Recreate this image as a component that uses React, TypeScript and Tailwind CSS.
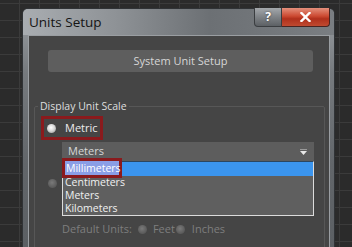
import React from "react";

function Radio({ on, className = "" }: { on?: boolean; className?: string }) {
  return (
    <span
      className={
        "block shrink-0 w-[9px] h-[9px] rounded-full " +
        (on
          ? "bg-[radial-gradient(circle_at_45%_40%,#ffffff,#d8d8d8_45%,#8a8a8a_100%)]"
          : "bg-[radial-gradient(circle_at_45%_40%,#7a7a7a,#5e5e5e_60%,#505050_100%)]") +
        " " +
        className
      }
    />
  );
}

export default function App() {
  return (
    <div className="w-[352px] h-[247px] overflow-hidden bg-[#2b2b2b] bg-[linear-gradient(to_right,#3b3b3b_1px,transparent_1px),linear-gradient(to_bottom,#3b3b3b_1px,transparent_1px)] bg-[size:20px_17px] bg-[position:19px_3px] pl-[22px] pt-[8px] font-['Segoe_UI','Open_Sans',sans-serif]">
      <div className="w-[313px] h-[260px] rounded-t-[6px] border border-[#303336] bg-[linear-gradient(to_bottom,#9a9ea2,#767a7e_25%,#62666a_60%,#5a5e62)] flex flex-col">
        {/* title bar */}
        <div className="h-[26px] flex items-start rounded-t-[5px] bg-[linear-gradient(to_right,#a9adb1,#8e9296_30%,#6c7074_60%,#7a7e82)]">
          <div className="pl-[6px] h-[26px] flex items-center text-[13.5px] text-[#151515]">Units Setup</div>
          <div className="flex-1" />
          <div className="flex mr-[4px] -mt-[1px]">
            <div className="w-[28px] h-[19px] rounded-bl-[4px] border border-[#3a3d40] border-t-0 bg-[linear-gradient(to_bottom,#a4a8ac,#7e8286_50%,#5c6064)] flex items-center justify-center text-white text-[12px] font-bold leading-none [text-shadow:0_0_2px_#333]">
              ?
            </div>
            <div className="w-[48px] h-[19px] rounded-br-[4px] border border-[#4a2420] border-t-0 border-l-0 bg-[linear-gradient(to_bottom,#e4907c,#cc4a32_45%,#b0301c_60%,#c04a30)] flex items-center justify-center">
              <svg width="11" height="10" viewBox="0 0 11 10">
                <path d="M1.5 1 L9.5 9 M9.5 1 L1.5 9" stroke="#ffffff" strokeWidth="2.4" strokeLinecap="square" />
              </svg>
            </div>
          </div>
        </div>
        {/* client */}
        <div className="flex-1 ml-[5px] mr-[4px] border border-[#9a9ea2] bg-[#454545] flex flex-col">
          <div className="mt-[14px] ml-[19px] w-[265px] h-[22px] rounded-[3px] bg-[#5e5e5e] flex items-center justify-center text-[11px] text-[#d6d6d6]">
            System Unit Setup
          </div>
          <fieldset className="mt-[27px] ml-[5px] w-[291px] h-[200px] border border-[#575757] rounded-[2px]">
            <legend className="ml-[3px] px-[2px] text-[10.5px] leading-[14px] text-[#dedede]">Display Unit Scale</legend>
            <div className="mt-[3px] ml-[6px] w-[62px] h-[24px] border-[3px] border-[#8a1a1d] flex items-center">
              <Radio on className="ml-[3px]" />
              <span className="ml-[9px] text-[11px] text-[#ececec]">Metric</span>
            </div>
            <div className="mt-[2px] ml-[27px] w-[252px] h-[19px] bg-[#5d5d5d] relative flex items-center pl-[6px] text-[11px] text-[#d6d6d6]">
              <span>Meters</span>
              <svg className="absolute right-[7px] top-[7px]" width="7" height="6" viewBox="0 0 7 6">
                <rect x="0" y="0" width="7" height="1" fill="#9a9a9a" />
                <path d="M0 2 L7 2 L3.5 6 Z" fill="#e8e8e8" />
              </svg>
              <div className="absolute left-0 top-full w-[252px] bg-[#5f5f5f] border border-[#dcdcdc] border-t-[#2c4660] text-[10.5px] text-[#f0f0f0] z-10">
                <div className="h-[14px] bg-[#3b95ee]" />
                <div className="h-[13px] leading-[13px] pl-[2px]">Centimeters</div>
                <div className="h-[13px] leading-[13px] pl-[2px]">Meters</div>
                <div className="h-[13px] leading-[13px] pl-[2px]">Kilometers</div>
                <div className="absolute -left-[1px] -top-[4px] w-[60px] h-[20px] border-[3px] border-[#8a1a1d] bg-[#3b95ee]">
                  <div className="h-full bg-[#8a9ee6] text-white leading-[14px] pl-[1px]">Millimeters</div>
                </div>
              </div>
            </div>
            <Radio className="mt-[18px] ml-[13px]" />
            <div className="mt-[34px] ml-[27px] h-[14px] flex items-center text-[11px] text-[#7e7e7e]">
              <span>Default Units:</span>
              <Radio className="ml-[6px]" />
              <span className="ml-[6px]">Feet</span>
              <Radio className="ml-[1px]" />
              <span className="ml-[7px]">Inches</span>
            </div>
          </fieldset>
        </div>
      </div>
    </div>
  );
}
